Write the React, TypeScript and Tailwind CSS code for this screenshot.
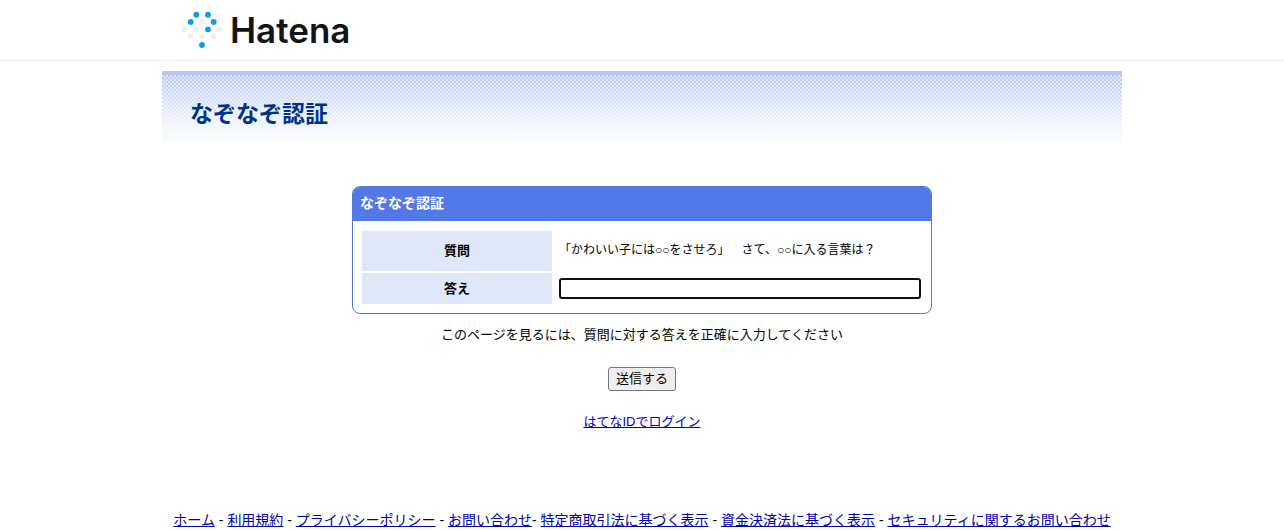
import React from "react";

const blueDots = [
  [196.3, 14.7],
  [208, 14.7],
  [190.7, 22],
  [213.7, 22],
  [208, 29.3],
  [202, 45],
];

const grayDots = [
  [202, 22],
  [184.7, 29.3],
  [196.3, 29.3],
  [219.3, 29.3],
  [190.7, 36.3],
  [202, 36.3],
  [213.7, 36.3],
];

const footerLinks = [
  { label: "ホーム", after: " - " },
  { label: "利用規約", after: " - " },
  { label: "プライバシーポリシー", after: " - " },
  { label: "お問い合わせ", after: "- " },
  { label: "特定商取引法に基づく表示", after: " - " },
  { label: "資金決済法に基づく表示", after: " - " },
  { label: "セキュリティに関するお問い合わせ", after: "" },
];

function Logo() {
  return (
    <a href="#" aria-label="Hatena" className="flex h-15 items-center gap-1.5">
      <svg viewBox="180 6 44 48" className="h-12 w-11" aria-hidden="true">
        {grayDots.map(([x, y]) => (
          <circle key={`${x}-${y}`} cx={x} cy={y} r="2.8" fill="#efefef" />
        ))}
        {blueDots.map(([x, y]) => (
          <circle key={`${x}-${y}`} cx={x} cy={y} r="2.9" fill="#0f9bea" />
        ))}
      </svg>
      <span className="font-[Inter,sans-serif] text-[35px] leading-10 font-semibold text-[#131417]">
        Hatena
      </span>
    </a>
  );
}

export default function App() {
  return (
    <div className="bg-white font-['Liberation_Sans','Noto_Sans_CJK_JP',sans-serif] text-[13px] leading-5 text-black [text-spacing-trim:space-all]">
      <header className="border-b border-[#eeeeee]">
        <div className="mx-auto max-w-[960px] px-[18px]">
          <Logo />
        </div>
      </header>

      <main className="mx-auto mt-2.5 max-w-[960px]">
        <div className="border-t-4 border-[#b5c8f0] bg-[linear-gradient(to_bottom,transparent,rgba(250,251,255,0.75)_55%,white_95%),repeating-conic-gradient(#b4c8f8_0_25%,#dfe8ff_0_50%)] bg-[size:100%_100%,4px_4px] px-7 pt-[23px] pb-5">
          <h1 className="text-[23px] leading-8 font-bold text-[#003388]">なぞなぞ認証</h1>
        </div>

        <form
          className="mt-9 flex flex-col items-center"
          onSubmit={(event) => event.preventDefault()}
        >
          <section className="w-full max-w-[580px] overflow-hidden rounded-lg border border-[#5279d8] bg-white">
            <h2 className="bg-[#5279e7] px-[7px] pt-1.5 pb-2 text-sm leading-5 font-bold text-white">
              なぞなぞ認証
            </h2>
            <div className="px-[9px] pt-[10px] pb-[9px]">
              <table className="w-full table-fixed border-collapse">
                <tbody>
                  <tr className="border-b-2 border-white">
                    <th scope="row" className="h-[41px] w-[190px] bg-[#dfe7f9] bg-clip-padding font-bold">
                      質問
                    </th>
                    <td className="pb-0.5 pl-[7px] text-xs">
                      「かわいい子には○○をさせろ」　さて、○○に入る言葉は？
                    </td>
                  </tr>
                  <tr>
                    <th scope="row" className="h-[32px] bg-[#dfe7f9] bg-clip-padding font-bold">
                      <label htmlFor="answer">答え</label>
                    </th>
                    <td className="pr-[1px] pl-[7px]">
                      <input
                        id="answer"
                        type="text"
                        className="block h-[21px] w-full rounded-[3px] border-2 border-[#101010] bg-white px-1 outline-none"
                      />
                    </td>
                  </tr>
                </tbody>
              </table>
            </div>
          </section>

          <p className="mt-[11px]">このページを見るには、質問に対する答えを正確に入力してください</p>
          <button
            type="submit"
            className="mt-[22px] h-6 rounded-[3px] border border-[#767676] bg-[#efefef] px-[7px] leading-5"
          >
            送信する
          </button>
          <a href="#" className="mt-[21px] text-[#0000cc] underline">
            はてなIDでログイン
          </a>
        </form>
      </main>

      <footer className="mt-[78px] text-center text-sm leading-5">
        {footerLinks.map(({ label, after }) => (
          <React.Fragment key={label}>
            <a href="#" className="text-[#0000aa] underline">
              {label}
            </a>
            {after}
          </React.Fragment>
        ))}
      </footer>
    </div>
  );
}
